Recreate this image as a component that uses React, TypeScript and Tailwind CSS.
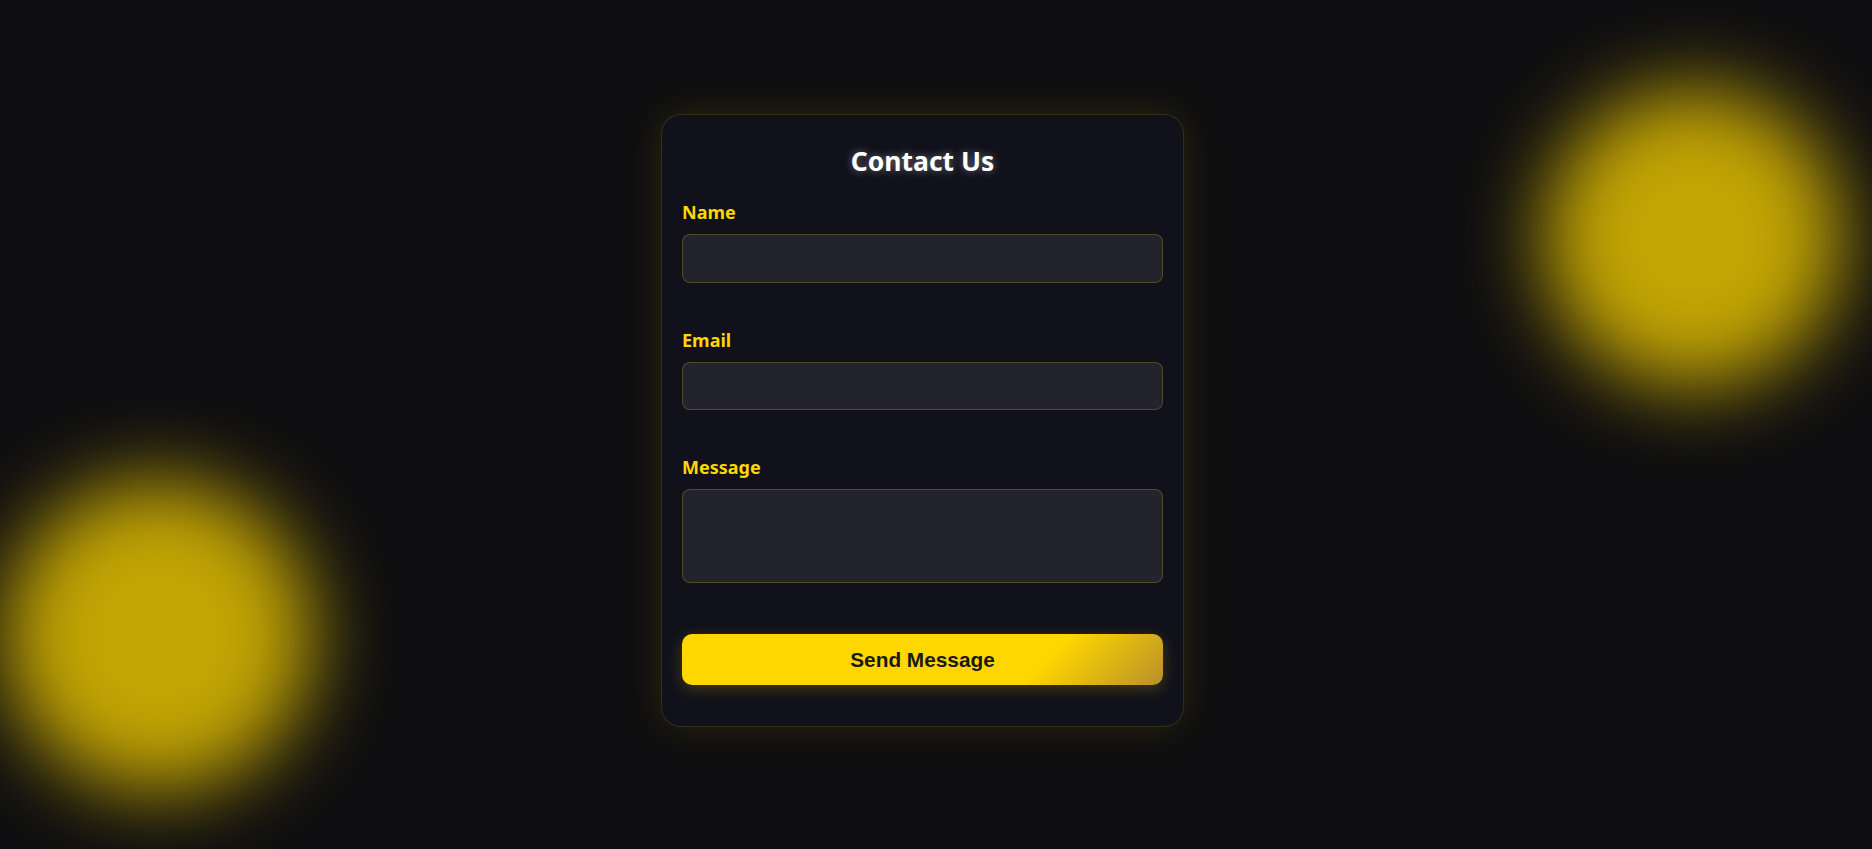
import React from "react";

export default function App() {
  return (
    <div className="relative min-h-screen w-full overflow-hidden bg-[#0e0e10] flex items-center justify-center pr-[27px] pb-[8px]">
      <div className="absolute left-[2px] top-[480px] w-[312px] h-[312px] rounded-full bg-[#ffd700] opacity-75 blur-[40px]" />
      <div className="absolute left-[1543px] top-[88px] w-[300px] h-[300px] rounded-full bg-[#ffd700] opacity-75 blur-[40px]" />

      <div className="relative w-[523px] rounded-[20px] border border-[rgba(255,215,0,0.15)] bg-[#10111b] px-[20px] pt-[28px] pb-[41px] shadow-[0_0_40px_rgba(255,215,0,0.12)]">
        <h1 className="text-center text-white font-bold text-[26.5px] leading-[36px] mb-[21px] [font-family:'Noto_Sans',sans-serif] [text-shadow:0_0_8px_rgba(255,255,255,0.4)]">
          Contact Us
        </h1>

        <div className="mb-[45px]">
          <label className="block text-[#ffd700] font-bold text-[18px] leading-[24px] mb-[10px] [font-family:'Noto_Sans',sans-serif]">
            Name
          </label>
          <input
            type="text"
            className="block w-full h-[48.5px] rounded-[8px] border border-[rgba(255,215,0,0.22)] bg-[#23232d] px-3 text-white outline-none"
          />
        </div>

        <div className="mb-[45px]">
          <label className="block text-[#ffd700] font-bold text-[18px] leading-[24px] mb-[10px] [font-family:'Noto_Sans',sans-serif]">
            Email
          </label>
          <input
            type="email"
            className="block w-full h-[48.5px] rounded-[8px] border border-[rgba(255,215,0,0.22)] bg-[#23232d] px-3 text-white outline-none"
          />
        </div>

        <div>
          <label className="block text-[#ffd700] font-bold text-[18px] leading-[24px] mb-[10px] [font-family:'Noto_Sans',sans-serif]">
            Message
          </label>
          <textarea className="block w-full h-[94px] resize-none rounded-[8px] border border-[rgba(255,215,0,0.22)] bg-[#23232d] px-3 py-2 text-white outline-none" />
        </div>

        <button
          type="button"
          className="mt-[51px] block w-full h-[51px] rounded-[10px] bg-[linear-gradient(135deg,#ffd700_0%,#ffd700_73%,#b8902a_100%)] text-[#1a1a1a] font-bold text-[20.8px] [font-family:'Liberation_Sans',Arial,sans-serif] shadow-[0_4px_15px_rgba(255,215,0,0.22)]"
        >
          Send Message
        </button>
      </div>
    </div>
  );
}
